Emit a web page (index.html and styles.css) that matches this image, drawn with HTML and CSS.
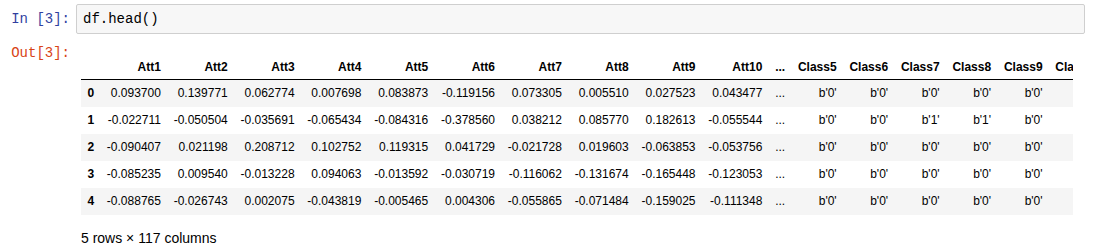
FILE: index.html
```html
<!DOCTYPE html>
<html lang="en">
<head>
    <meta charset="UTF-8">
    <title>df.head()</title>
    <link rel="stylesheet" href="styles.css">
</head>
<body>

<div class="cell">

    <div class="input">
        <div class="prompt prompt-in">In&nbsp;[3]:</div>
        <div class="input-area">df.head()</div>
    </div>

    <div class="output">
        <div class="prompt prompt-out">Out[3]:</div>
        <div class="output-area">
            <div class="df-wrap">
                <table class="dataframe">
                    <thead>
                        <tr>
                            <th></th>
                            <th>Att1</th><th>Att2</th><th>Att3</th><th>Att4</th><th>Att5</th>
                            <th>Att6</th><th>Att7</th><th>Att8</th><th>Att9</th><th>Att10</th>
                            <th>...</th>
                            <th>Class5</th><th>Class6</th><th>Class7</th><th>Class8</th><th>Class9</th>
                            <th>Class10</th>
                        </tr>
                    </thead>
                    <tbody>
                        <tr>
                            <th>0</th>
                            <td>0.093700</td><td>0.139771</td><td>0.062774</td><td>0.007698</td><td>0.083873</td>
                            <td>-0.119156</td><td>0.073305</td><td>0.005510</td><td>0.027523</td><td>0.043477</td>
                            <td>...</td>
                            <td>b'0'</td><td>b'0'</td><td>b'0'</td><td>b'0'</td><td>b'0'</td>
                            <td></td>
                        </tr>
                        <tr>
                            <th>1</th>
                            <td>-0.022711</td><td>-0.050504</td><td>-0.035691</td><td>-0.065434</td><td>-0.084316</td>
                            <td>-0.378560</td><td>0.038212</td><td>0.085770</td><td>0.182613</td><td>-0.055544</td>
                            <td>...</td>
                            <td>b'0'</td><td>b'0'</td><td>b'1'</td><td>b'1'</td><td>b'0'</td>
                            <td></td>
                        </tr>
                        <tr>
                            <th>2</th>
                            <td>-0.090407</td><td>0.021198</td><td>0.208712</td><td>0.102752</td><td>0.119315</td>
                            <td>0.041729</td><td>-0.021728</td><td>0.019603</td><td>-0.063853</td><td>-0.053756</td>
                            <td>...</td>
                            <td>b'0'</td><td>b'0'</td><td>b'0'</td><td>b'0'</td><td>b'0'</td>
                            <td></td>
                        </tr>
                        <tr>
                            <th>3</th>
                            <td>-0.085235</td><td>0.009540</td><td>-0.013228</td><td>0.094063</td><td>-0.013592</td>
                            <td>-0.030719</td><td>-0.116062</td><td>-0.131674</td><td>-0.165448</td><td>-0.123053</td>
                            <td>...</td>
                            <td>b'0'</td><td>b'0'</td><td>b'0'</td><td>b'0'</td><td>b'0'</td>
                            <td></td>
                        </tr>
                        <tr>
                            <th>4</th>
                            <td>-0.088765</td><td>-0.026743</td><td>0.002075</td><td>-0.043819</td><td>-0.005465</td>
                            <td>0.004306</td><td>-0.055865</td><td>-0.071484</td><td>-0.159025</td><td>-0.111348</td>
                            <td>...</td>
                            <td>b'0'</td><td>b'0'</td><td>b'0'</td><td>b'0'</td><td>b'0'</td>
                            <td></td>
                        </tr>
                    </tbody>
                </table>
            </div>
            <p class="shape">5 rows × 117 columns</p>
        </div>
    </div>

</div>

</body>
</html>
```

FILE: styles.css
```css
body {
    margin: 0;
    font-family: "Liberation Sans", Arial, sans-serif;
    color: black;
    background: white;
}

.cell {
    padding: 4px 14px 0 0;
}

.input, .output {
    display: flex;
}

.output {
    margin-top: 6px;
}

.prompt {
    width: 76px;
    flex: none;
    box-sizing: border-box;
    padding-right: 6px;
    text-align: right;
    font-family: "Liberation Mono", "Courier New", monospace;
    font-size: 14px;
    white-space: nowrap;
}

.prompt-in {
    color: #303F9F;
    line-height: 30px;
}

.prompt-out {
    color: #D84315;
    line-height: 16px;
    padding-top: 5px;
}

.input-area {
    flex: 1;
    height: 28px;
    line-height: 28px;
    padding: 0 6px;
    background: #f7f7f7;
    border: 1px solid #cfcfcf;
    border-radius: 2px;
    font-family: "Liberation Mono", "Courier New", monospace;
    font-size: 14px;
}

.output-area {
    flex: 1;
    min-width: 0;
    padding-left: 5px;
    margin-right: 12px;
}

.df-wrap {
    overflow: hidden;
    margin-top: 14px;
}

.dataframe {
    border-collapse: collapse;
    border-spacing: 0;
    font-size: 12px;
    line-height: 15px;
}

.dataframe th, .dataframe td {
    padding: 6px 6.4px;
    text-align: right;
    vertical-align: middle;
    white-space: nowrap;
}

.dataframe thead th {
    padding-bottom: 4px;
    border-bottom: 1px solid black;
}

.dataframe tbody tr:nth-child(odd) {
    background: #f5f5f5;
}

.shape {
    margin: 15px 0 0;
    font-size: 14px;
}
```
